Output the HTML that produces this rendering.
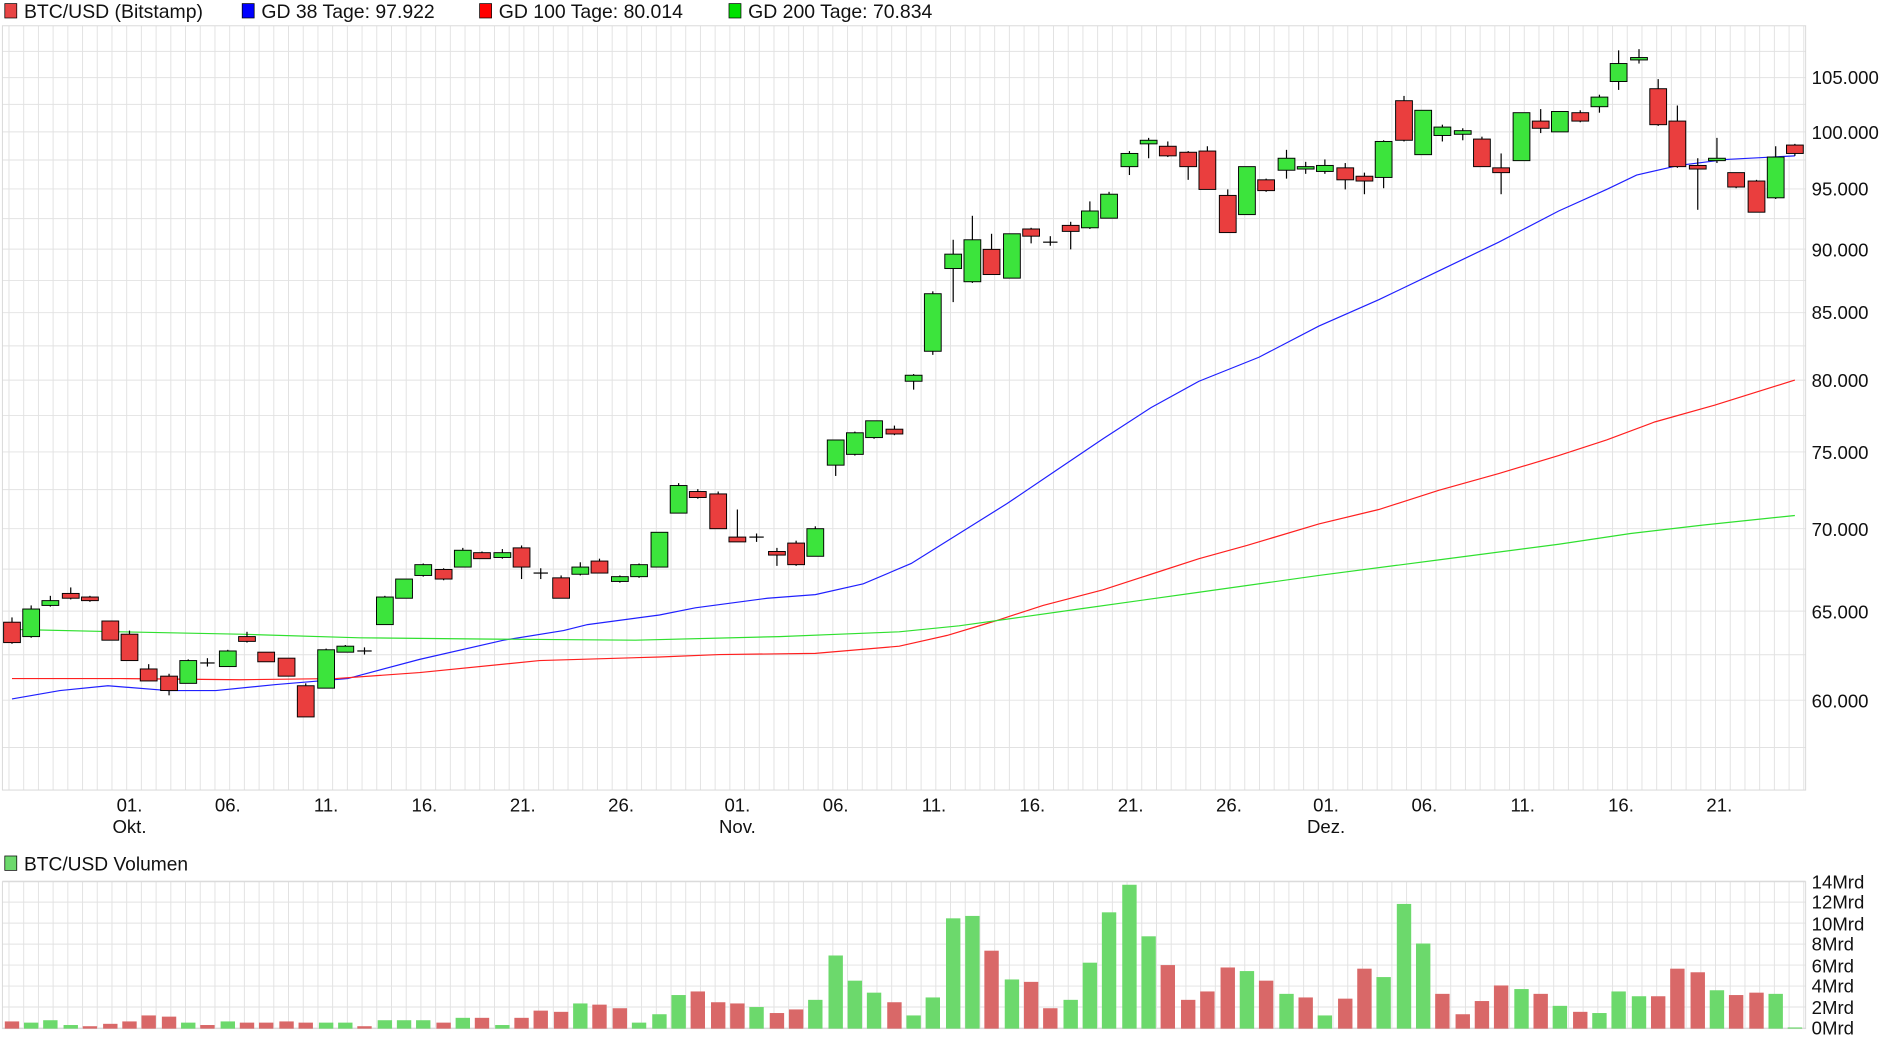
<!DOCTYPE html>
<html><head><meta charset="utf-8"><style>
html,body{margin:0;padding:0;background:#fff;width:1880px;height:1049px;overflow:hidden}
svg{display:block}
text{font-family:"Liberation Sans",sans-serif;fill:#111}
</style></head><body>
<svg id="s" width="1880" height="1049" viewBox="0 0 1568 875" preserveAspectRatio="none">
<g id="grid"></g>
<g id="ma"></g>
<g id="cd"></g>
<g id="vol"></g>
<rect x="4" y="3" width="10" height="12" fill="#e84545" stroke="#000" stroke-width="0.6"/>
<text x="20" y="15" font-size="16.2">BTC/USD (Bitstamp)</text>
<rect x="202" y="3" width="10" height="12" fill="#0000ff" stroke="#000" stroke-width="0.6"/>
<text x="218" y="15" font-size="16.2">GD 38 Tage: 97.922</text>
<rect x="400" y="3" width="10" height="12" fill="#ff0000" stroke="#000" stroke-width="0.6"/>
<text x="416" y="15" font-size="16.2">GD 100 Tage: 80.014</text>
<rect x="608" y="3" width="10" height="12" fill="#00e000" stroke="#000" stroke-width="0.6"/>
<text x="624" y="15" font-size="16.2">GD 200 Tage: 70.834</text>
<rect x="4" y="714" width="10" height="12" fill="#6cd96c" stroke="#000" stroke-width="0.6"/>
<text x="20" y="726" font-size="16">BTC/USD Volumen</text>
<g font-size="15.5">
<text x="1511" y="70">105.000</text>
<text x="1511" y="116">100.000</text>
<text x="1511" y="163">95.000</text>
<text x="1511" y="214">90.000</text>
<text x="1511" y="266">85.000</text>
<text x="1511" y="323">80.000</text>
<text x="1511" y="383">75.000</text>
<text x="1511" y="447">70.000</text>
<text x="1511" y="516">65.000</text>
<text x="1511" y="590">60.000</text>
<text x="1511" y="741">14Mrd</text>
<text x="1511" y="758">12Mrd</text>
<text x="1511" y="776">10Mrd</text>
<text x="1511" y="793">8Mrd</text>
<text x="1511" y="811">6Mrd</text>
<text x="1511" y="828">4Mrd</text>
<text x="1511" y="846">2Mrd</text>
<text x="1511" y="863">0Mrd</text>
</g>
<g font-size="15.5" text-anchor="middle">
<text x="108" y="677">01.</text><text x="108" y="695">Okt.</text>
<text x="190" y="677">06.</text>
<text x="272" y="677">11.</text>
<text x="354" y="677">16.</text>
<text x="436" y="677">21.</text>
<text x="518" y="677">26.</text>
<text x="615" y="677">01.</text><text x="615" y="695">Nov.</text>
<text x="697" y="677">06.</text>
<text x="779" y="677">11.</text>
<text x="861" y="677">16.</text>
<text x="943" y="677">21.</text>
<text x="1025" y="677">26.</text>
<text x="1106" y="677">01.</text><text x="1106" y="695">Dez.</text>
<text x="1188" y="677">06.</text>
<text x="1270" y="677">11.</text>
<text x="1352" y="677">16.</text>
<text x="1434" y="677">21.</text>
</g>
</svg>
<script>
var NS="http://www.w3.org/2000/svg";
function el(p,t,a){var e=document.createElementNS(NS,t);for(var k in a)e.setAttribute(k,a[k]);p.appendChild(e);return e;}
var g=document.getElementById('grid');
function py(p){return 110-928*Math.log(p/100000);}
for(var x=7.5;x<1506;x+=12.27){el(g,'line',{x1:x,x2:x,y1:21.5,y2:659,stroke:'#e2e2e2','stroke-width':0.8});el(g,'line',{x1:x,x2:x,y1:735.5,y2:858,stroke:'#e2e2e2','stroke-width':0.8});}
for(var p=57500;p<=107500;p+=2500){var y=py(p);if(y>21&&y<659)el(g,'line',{x1:2,x2:1506,y1:y,y2:y,stroke:'#e2e2e2','stroke-width':0.8});}
for(var i=0;i<=7;i++){var y=857.5-i*17.5;el(g,'line',{x1:2,x2:1506,y1:y,y2:y,stroke:'#e2e2e2','stroke-width':0.8});}
el(g,'rect',{x:2,y:21.5,width:1504,height:637.5,fill:'none',stroke:'#d8d8d8','stroke-width':0.8});
el(g,'rect',{x:2,y:735.5,width:1504,height:122.5,fill:'none',stroke:'#d8d8d8','stroke-width':0.8});
var m=document.getElementById('ma');
function line(pts,c){el(m,'polyline',{points:pts.map(function(q){return q.join(',')}).join(' '),fill:'none',stroke:c,'stroke-width':1});}
line([[10,583],[50,576],[90,572],[140,576],[180,576],[230,571],[290,566],[350,550],[420,534],[470,526],[490,521],[550,513],[580,507],[640,499],[680,496],[720,487],[760,470],[800,445],[840,420],[880,393],[920,366],[960,340],[1000,318],[1050,298],[1100,272],[1150,250],[1200,226],[1250,202],[1300,176],[1340,158],[1365,146],[1400,138],[1440,133],[1497,130]],'#2020ff');
line([[10,566],[100,566],[200,567],[280,566],[350,561],[450,551],[550,548],[600,546],[680,545],[750,539],[790,530],[830,518],[870,505],[920,492],[960,479],[1000,466],[1040,455],[1100,437],[1150,425],[1200,409],[1250,395],[1300,380],[1340,367],[1380,352],[1430,338],[1497,317]],'#ff2020');
line([[10,525],[100,527],[200,529],[300,532],[400,533],[530,534],[650,531],[750,527],[800,522],[850,515],[900,508],[1000,494],[1100,480],[1200,467],[1300,454],[1360,445],[1420,438],[1497,430]],'#30e030');
var C=[[10,519,536,515,537,'r'],[26,508,531,505,532,'g'],[42,501,505,497,506,'g'],[59,495,499,490,500,'r'],[75,498,501,497,502,'r'],[92,518,534,518,534,'r'],[108,529,551,526,551,'r'],[124,558,568,554,568,'r'],[141,564,576,562,580,'r'],[157,551,570,550,570,'g'],[173,553,553,549,556,'d'],[190,543,556,542,556,'g'],[206,531,535,527,536,'r'],[222,544,552,544,552,'r'],[239,549,564,549,564,'r'],[255,572,598,570,598,'r'],[272,542,574,541,574,'g'],[288,539,544,538,544,'g'],[304,543,543,540,546,'d'],[321,498,521,497,521,'g'],[337,483,499,483,499,'g'],[353,471,480,470,481,'g'],[370,475,483,474,484,'r'],[386,459,473,457,473,'g'],[402,461,466,460,466,'r'],[419,461,465,458,466,'g'],[435,457,473,455,483,'r'],[451,478,478,474,483,'d'],[468,482,499,480,499,'r'],[484,473,479,469,480,'g'],[500,468,478,466,478,'r'],[517,481,485,480,486,'g'],[533,471,481,470,482,'g'],[550,444,473,444,473,'g'],[566,405,428,403,428,'g'],[582,410,415,408,416,'r'],[599,412,441,410,441,'r'],[615,448,452,425,452,'r'],[631,448,448,445,452,'d'],[648,460,463,457,472,'r'],[664,453,471,451,472,'r'],[680,441,464,439,464,'g'],[697,367,388,367,397,'g'],[713,361,379,360,380,'g'],[729,351,365,351,366,'g'],[746,358,362,355,363,'r'],[762,313,318,312,325,'g'],[778,245,293,243,296,'g'],[795,212,224,200,252,'g'],[811,200,235,180,236,'g'],[827,208,229,195,229,'r'],[844,195,232,195,232,'g'],[860,191,197,190,203,'r'],[876,202,202,197,205,'d'],[893,188,193,185,208,'r'],[909,176,190,168,191,'g'],[925,162,182,160,182,'g'],[942,128,139,126,146,'g'],[958,117,120,115,132,'g'],[974,122,130,118,131,'r'],[991,127,139,126,150,'r'],[1007,126,158,122,158,'r'],[1024,163,194,158,194,'r'],[1040,139,179,139,179,'g'],[1056,150,159,149,160,'r'],[1073,132,142,125,149,'g'],[1089,139,141,135,145,'g'],[1105,138,143,133,145,'g'],[1122,140,150,136,158,'r'],[1138,147,151,144,162,'r'],[1154,118,148,117,157,'g'],[1171,84,117,80,118,'r'],[1187,92,129,92,129,'g'],[1203,106,113,104,118,'g'],[1220,109,112,107,117,'g'],[1236,116,139,114,139,'r'],[1252,140,144,128,162,'r'],[1269,94,134,94,134,'g'],[1285,101,107,91,111,'r'],[1301,93,110,93,110,'g'],[1318,94,101,92,102,'r'],[1334,81,89,79,94,'g'],[1350,53,68,42,75,'g'],[1367,48,50,41,53,'g'],[1383,74,104,66,105,'r'],[1399,101,139,88,140,'r'],[1416,138,141,132,175,'r'],[1432,132,134,115,136,'g'],[1448,144,156,144,157,'r'],[1465,151,177,150,177,'r'],[1481,131,165,122,166,'g'],[1497,121,128,120,130,'r']];
var cd=document.getElementById('cd');
C.forEach(function(c){var x=c[0];el(cd,'line',{x1:x,x2:x,y1:c[3],y2:c[4],stroke:'#000','stroke-width':1});
if(c[5]=='d'){el(cd,'line',{x1:x-6,x2:x+6,y1:c[1],y2:c[1],stroke:'#000','stroke-width':1});}
else el(cd,'rect',{x:x-7,y:c[1],width:14,height:Math.max(1,c[2]-c[1]),fill:c[5]=='g'?'#3ce43c':'#ea3e3e',stroke:'#000','stroke-width':0.8});});
var V=[[10,852,'r'],[26,853,'g'],[42,851,'g'],[59,855,'g'],[75,856,'r'],[92,854,'r'],[108,852,'r'],[124,847,'r'],[141,848,'r'],[157,853,'g'],[173,855,'r'],[190,852,'g'],[206,853,'r'],[222,853,'r'],[239,852,'r'],[255,853,'r'],[272,853,'g'],[288,853,'g'],[304,856,'r'],[321,851,'g'],[337,851,'g'],[353,851,'g'],[370,853,'r'],[386,849,'g'],[402,849,'r'],[419,855,'g'],[435,849,'r'],[451,843,'r'],[468,844,'r'],[484,837,'g'],[500,838,'r'],[517,841,'r'],[533,853,'g'],[550,846,'g'],[566,830,'g'],[582,827,'r'],[599,836,'r'],[615,837,'r'],[631,840,'g'],[648,845,'r'],[664,842,'r'],[680,834,'g'],[697,797,'g'],[713,818,'g'],[729,828,'g'],[746,836,'r'],[762,847,'g'],[778,832,'g'],[795,766,'g'],[811,764,'g'],[827,793,'r'],[844,817,'g'],[860,819,'r'],[876,841,'r'],[893,834,'g'],[909,803,'g'],[925,761,'g'],[942,738,'g'],[958,781,'g'],[974,805,'r'],[991,834,'r'],[1007,827,'r'],[1024,807,'r'],[1040,810,'g'],[1056,818,'r'],[1073,829,'g'],[1089,832,'r'],[1105,847,'g'],[1122,833,'r'],[1138,808,'r'],[1154,815,'g'],[1171,754,'g'],[1187,787,'g'],[1203,829,'r'],[1220,846,'r'],[1236,835,'r'],[1252,822,'r'],[1269,825,'g'],[1285,829,'r'],[1301,839,'g'],[1318,844,'r'],[1334,845,'g'],[1350,827,'g'],[1367,831,'g'],[1383,831,'r'],[1399,808,'r'],[1416,811,'r'],[1432,826,'g'],[1448,830,'r'],[1465,828,'r'],[1481,829,'g'],[1497,857,'g']];
var vg=document.getElementById('vol');
V.forEach(function(v){el(vg,'rect',{x:v[0]-6,y:v[1],width:12,height:858-v[1],fill:v[2]=='g'?'#6cd96c':'#d96868'});});
</script>
</body></html>
